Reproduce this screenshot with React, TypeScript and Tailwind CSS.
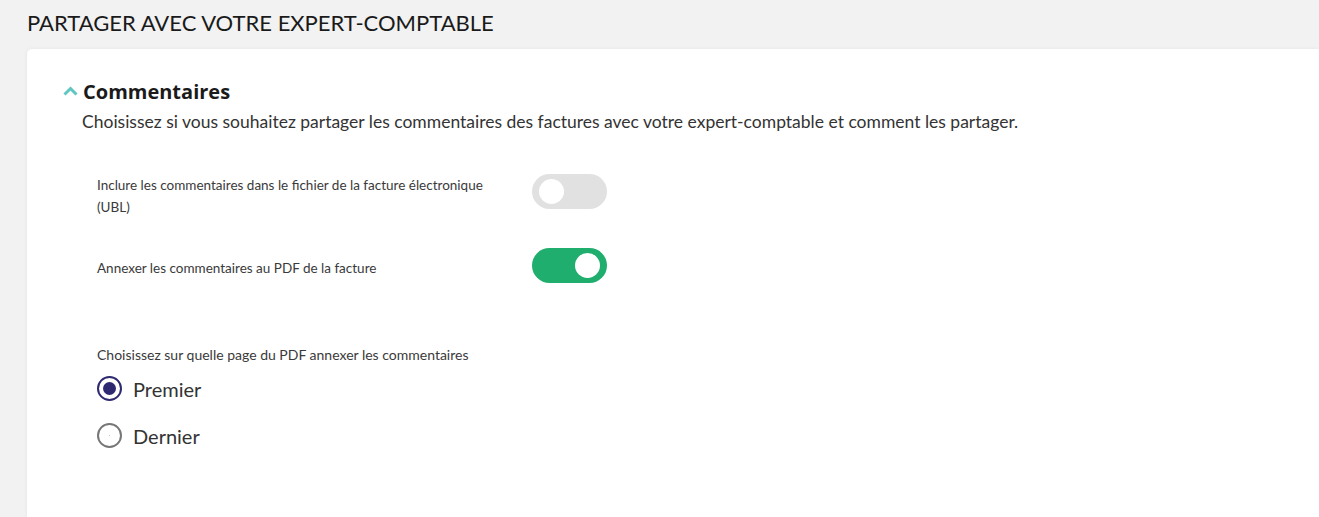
import { useState } from 'react'

function Toggle({ on, onChange }: { on: boolean; onChange: () => void }) {
  return (
    <button
      onClick={onChange}
      className={`flex h-[35px] w-[75px] shrink-0 items-center rounded-full px-[7px] ${
        on ? 'justify-end bg-[#20ae6f]' : 'justify-start bg-[#e1e1e1]'
      }`}
    >
      <span className="block h-[25px] w-[25px] rounded-full bg-white" />
    </button>
  )
}

function Radio({ checked, label, onSelect }: { checked: boolean; label: string; onSelect: () => void }) {
  return (
    <label onClick={onSelect} className="flex cursor-pointer items-center gap-[11px]">
      <span
        className={`flex h-[25px] w-[25px] items-center justify-center rounded-full border-2 ${
          checked ? 'border-[#2e2970]' : 'border-[#777777]'
        }`}
      >
        {checked ? (
          <span className="block h-[13px] w-[13px] rounded-full bg-[#2e2970]" />
        ) : (
          <span className="block h-px w-px rounded-full bg-[#b5b5c8]" />
        )}
      </span>
      <span className="text-[20px] text-[#333333]">{label}</span>
    </label>
  )
}

export default function App() {
  const [ubl, setUbl] = useState(false)
  const [pdf, setPdf] = useState(true)
  const [page, setPage] = useState<'first' | 'last'>('first')

  return (
    <div className="min-h-[517px] bg-[#f2f2f2] pl-[27px] font-['Lato',sans-serif] text-[#222222]">
      <h1 className="pt-[7px] text-[22px] leading-[31px] text-[#1a1a1a]">PARTAGER AVEC VOTRE EXPERT-COMPTABLE</h1>

      {/* card */}
      <div className="mt-[11px] h-[469px] rounded-tl-[5px] bg-white pl-[36px] pt-[28px] shadow-[0_0_4px_rgba(0,0,0,0.06)]">
        <div className="flex items-center gap-[5px]">
          <svg width="15" height="10" viewBox="0 0 15 10" className="mt-[-3px]">
            <path d="M1.5 8.5 L7.5 2.5 L13.5 8.5" fill="none" stroke="#5ec7c1" strokeWidth="3" />
          </svg>
          <h2 className="font-['Open_Sans',sans-serif] text-[20px] font-bold leading-[30px] text-[#1b1b1b]">
            Commentaires
          </h2>
        </div>
        <p className="ml-[19px] mt-[3px] text-[17.5px] leading-[24px] text-[#333333]">
          Choisissez si vous souhaitez partager les commentaires des factures avec votre expert-comptable et comment les partager.
        </p>

        <div className="ml-[34px] mt-[40px] w-[510px] text-[13.5px] leading-[22px] text-[#3a3a3a]">
          <div className="flex items-start justify-between">
            <p className="w-[400px]">
              Inclure les commentaires dans le fichier de la facture électronique (UBL)
            </p>
            <Toggle on={ubl} onChange={() => setUbl(!ubl)} />
          </div>
          <div className="mt-[30px] flex items-center justify-between">
            <p className="pt-[4px]">Annexer les commentaires au PDF de la facture</p>
            <Toggle on={pdf} onChange={() => setPdf(!pdf)} />
          </div>

          <p className="mt-[61px] text-[14px]">Choisissez sur quelle page du PDF annexer les commentaires</p>
          <div className="mt-[10px] flex flex-col gap-[22px]">
            <Radio checked={page === 'first'} label="Premier" onSelect={() => setPage('first')} />
            <Radio checked={page === 'last'} label="Dernier" onSelect={() => setPage('last')} />
          </div>
        </div>
      </div>
    </div>
  )
}
